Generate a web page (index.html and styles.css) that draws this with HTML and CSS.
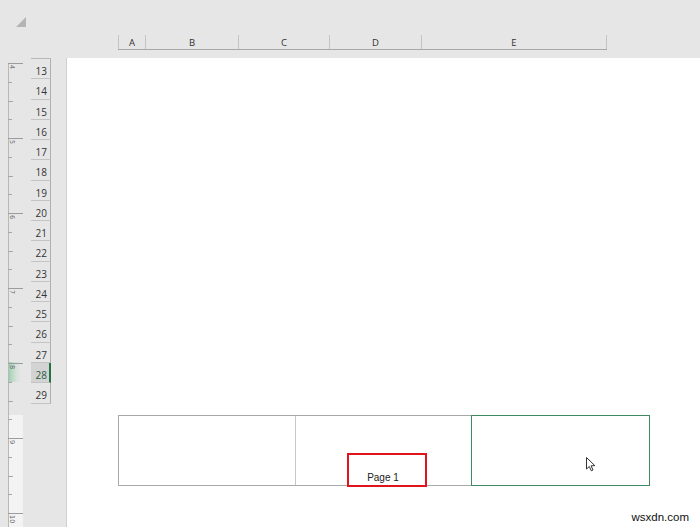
FILE: index.html
```html
<!DOCTYPE html>
<html>
<head>
<meta charset="utf-8">
<link rel="stylesheet" href="styles.css">
</head>
<body>
<div class="sheet">
  <div class="top">
    <svg class="corner" width="10" height="10" viewBox="0 0 10 10"><polygon points="10,0 10,10 0,10" fill="#b4b4b4"/></svg>
    <div class="colhead">
      <div class="col a">A</div>
      <div class="col b">B</div>
      <div class="col c">C</div>
      <div class="col d">D</div>
      <div class="col e">E</div>
    </div>
  </div>
  <div class="main">
    <svg class="ruler" width="23" height="469" viewBox="0 0 23 469">
      <defs>
        <linearGradient id="sel" x1="0" x2="1" y1="0" y2="0">
          <stop offset="0" stop-color="#8fd0a6"/>
          <stop offset="1" stop-color="#e6e6e6" stop-opacity="0"/>
        </linearGradient>
      </defs>
      <rect x="8" y="357" width="15" height="112" fill="#f3f3f3"/>
      <rect x="8" y="304" width="15" height="20" fill="url(#sel)"/>
      <line x1="8.5" y1="5" x2="8.5" y2="469" stroke="#b8b8b8"/>
      <g stroke="#9c9c9c">
        <line x1="8" y1="5.5" x2="23" y2="5.5"/>
        <line x1="8" y1="80.5" x2="23" y2="80.5"/>
        <line x1="8" y1="155.5" x2="23" y2="155.5"/>
        <line x1="8" y1="230.5" x2="23" y2="230.5"/>
        <line x1="8" y1="305.5" x2="23" y2="305.5"/>
        <line x1="8" y1="380.5" x2="23" y2="380.5"/>
        <line x1="8" y1="455.5" x2="23" y2="455.5"/>
      </g>
      <g stroke="#a6a6a6">
        <line x1="8" y1="24.5" x2="12" y2="24.5"/><line x1="8" y1="43.5" x2="13" y2="43.5"/><line x1="8" y1="61.5" x2="12" y2="61.5"/>
        <line x1="8" y1="99.5" x2="12" y2="99.5"/><line x1="8" y1="118.5" x2="13" y2="118.5"/><line x1="8" y1="136.5" x2="12" y2="136.5"/>
        <line x1="8" y1="174.5" x2="12" y2="174.5"/><line x1="8" y1="193.5" x2="13" y2="193.5"/><line x1="8" y1="211.5" x2="12" y2="211.5"/>
        <line x1="8" y1="249.5" x2="12" y2="249.5"/><line x1="8" y1="268.5" x2="13" y2="268.5"/><line x1="8" y1="286.5" x2="12" y2="286.5"/>
        <line x1="8" y1="324.5" x2="12" y2="324.5"/><line x1="8" y1="343.5" x2="13" y2="343.5"/><line x1="8" y1="361.5" x2="12" y2="361.5"/>
        <line x1="8" y1="399.5" x2="12" y2="399.5"/><line x1="8" y1="418.5" x2="13" y2="418.5"/><line x1="8" y1="436.5" x2="12" y2="436.5"/>
      </g>
      <g class="rnum">
        <text transform="translate(10,7) rotate(90)">4</text>
        <text transform="translate(10,82) rotate(90)">5</text>
        <text transform="translate(10,157) rotate(90)">6</text>
        <text transform="translate(10,232) rotate(90)">7</text>
        <text transform="translate(10,307) rotate(90)">8</text>
        <text transform="translate(10,382) rotate(90)">9</text>
        <text transform="translate(10,457) rotate(90)">10</text>
      </g>
    </svg>
    <div class="rows">
      <div class="row">13</div>
      <div class="row">14</div>
      <div class="row">15</div>
      <div class="row">16</div>
      <div class="row">17</div>
      <div class="row">18</div>
      <div class="row">19</div>
      <div class="row">20</div>
      <div class="row">21</div>
      <div class="row">22</div>
      <div class="row">23</div>
      <div class="row">24</div>
      <div class="row">25</div>
      <div class="row">26</div>
      <div class="row">27</div>
      <div class="row sel">28</div>
      <div class="row">29</div>
    </div>
    <div class="page">
      <div class="footer">
        <div class="cell"></div>
        <div class="cell mid">
          <span class="pagelabel">Page 1</span>
          <div class="redbox"></div>
        </div>
        <div class="cell active">
          <svg class="cursor" width="12" height="16" viewBox="0 0 12 16"><path d="M1.5 1.5 L1.5 13 L4.3 10.5 L6.3 14.8 L8 14 L6.1 9.8 L9.8 9.6 Z" fill="#fff" stroke="#333" stroke-width="1" stroke-linejoin="round"/></svg>
        </div>
      </div>
      <div class="mark">wsxdn.com</div>
    </div>
  </div>
</div>
</body>
</html>
```

FILE: styles.css
```css
html, body {
  margin: 0;
  padding: 0;
}
body {
  width: 700px;
  height: 527px;
  overflow: hidden;
  background: #e6e6e6;
  font-family: "Open Sans", "Noto Sans", sans-serif;
  color: #333;
}
.sheet {
  display: flex;
  flex-direction: column;
  height: 527px;
}
.top {
  height: 58px;
  position: relative;
}
.corner {
  position: absolute;
  left: 16px;
  top: 17px;
}
.colhead {
  position: absolute;
  left: 118px;
  top: 35px;
  display: flex;
  height: 14px;
  border-bottom: 1px solid #a8a8a8;
}
.col {
  box-sizing: border-box;
  border-left: 1px solid #c4c4c4;
  font-size: 9.5px;
  line-height: 15px;
  text-align: center;
  color: #333;
}
.col.a { width: 27px; }
.col.b { width: 93px; }
.col.c { width: 91px; }
.col.d { width: 92px; }
.col.e { width: 186px; border-right: 1px solid #c4c4c4; }
.main {
  display: flex;
  flex: 1;
}
.ruler {
  display: block;
  flex: none;
}
.rnum {
  font-family: "DejaVu Sans", sans-serif;
  font-size: 6.5px;
  fill: #666;
}
.rows {
  flex: none;
  width: 20px;
  margin-left: 8px;
  border-top: 1px solid #b8b8b8;
  box-sizing: border-box;
  align-self: flex-start;
}
.row {
  box-sizing: border-box;
  height: 20.27px;
  border-bottom: 1px solid #c4c4c4;
  border-right: 1px solid #b0b0b0;
  text-align: right;
  padding-right: 3px;
  font-size: 10px;
  line-height: 25px;
  color: #333;
}
.row.sel {
  background: #d3d3d3;
  border-right: 2px solid #217346;
  padding-right: 2px;
  color: #2a5c40;
}
.page {
  flex: 1;
  margin-left: 15px;
  background: #fff;
  border-left: 1px solid #cfcfcf;
  position: relative;
}
.footer {
  margin-left: 51px;
  margin-top: 357px;
  width: 532px;
  height: 71px;
  box-sizing: border-box;
  border: 1px solid #a8a8a8;
  display: grid;
  grid-template-columns: 176px 177px 1fr;
}
.cell {
  position: relative;
}
.cell.mid {
  border-left: 1px solid #c8c8c8;
  display: flex;
  justify-content: center;
  align-items: flex-end;
}
.pagelabel {
  font-family: "Liberation Sans", Arial, sans-serif;
  font-size: 10px;
  line-height: 12px;
  margin-bottom: 1px;
  margin-right: 2px;
  color: #222;
}
.redbox {
  position: absolute;
  left: 51px;
  top: 37px;
  width: 80px;
  height: 34px;
  box-sizing: border-box;
  border: 2px solid #e0141c;
}
.cell.active {
  margin: -1px;
  border: 1px solid #3f8a62;
}
.cursor {
  position: absolute;
  left: 113px;
  top: 40px;
}
.mark {
  position: absolute;
  right: 11px;
  bottom: 4px;
  font-family: "Liberation Sans", Arial, sans-serif;
  font-size: 11.5px;
  color: #111;
  background: linear-gradient(to right, rgba(255,255,255,0), #fff 20%);
}
```
